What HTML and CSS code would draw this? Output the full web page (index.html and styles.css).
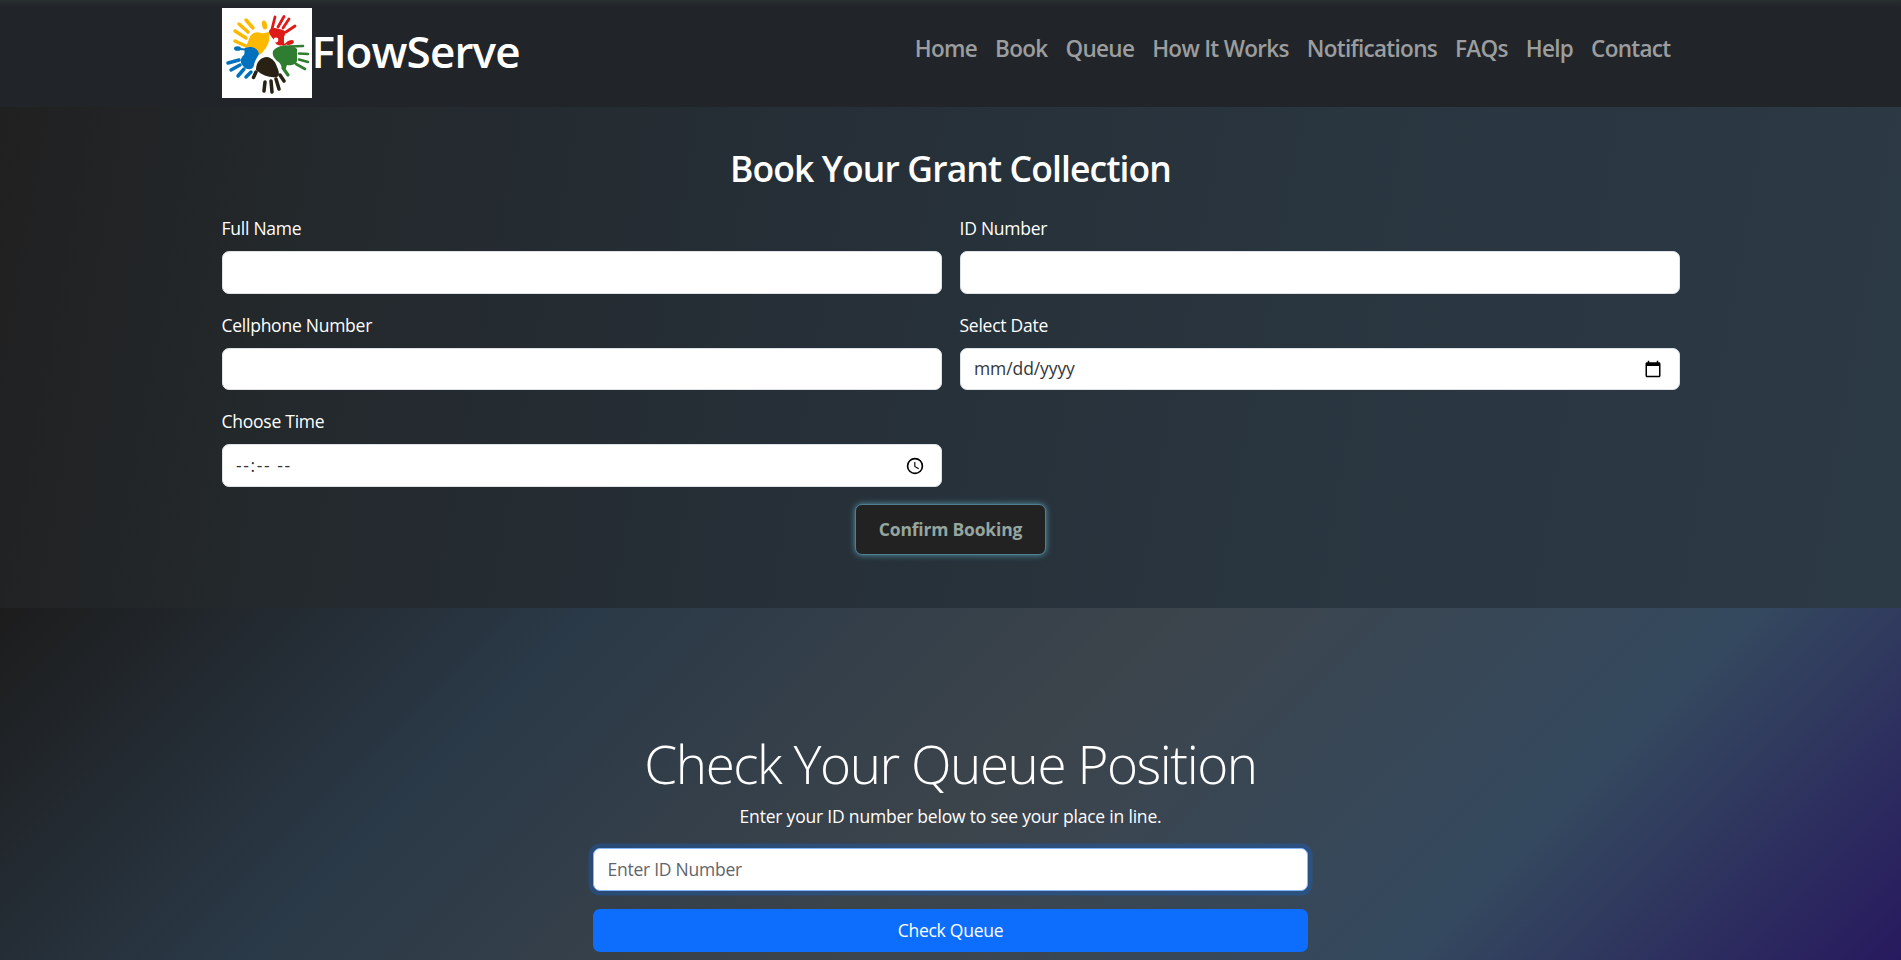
FILE: index.html
```html
<!DOCTYPE html>
<html lang="en">
<head>
<meta charset="utf-8">
<title>FlowServe</title>
<link rel="stylesheet" href="styles.css">
</head>
<body>
<header class="navbar">
  <div class="container bar">
    <a class="brand">
      <svg class="logo" viewBox="0 0 90 90">
        <rect width="90" height="90" fill="#fff"/>
        <g fill="#fdb900" stroke="#fdb900" stroke-linecap="round">
          <path stroke="none" d="M27 31c2-6 7-8 12-6 3 1 6-1 8-1 1 6 0 13-4 17-2 2-3 5-6 6-3-6-8-9-13-8 1-3 2-5 3-8z"/>
          <path fill="none" stroke-width="3.500" d="M31 20L24 12M26 24L17 16M24 30L13 23M24 38L13 33"/>
          <ellipse cx="42.500" cy="17" rx="2.500" ry="4.500" stroke="none" transform="rotate(-12 42.500 17)"/>
        </g>
        <g fill="#df1b17" stroke="#df1b17" stroke-linecap="round">
          <path stroke="none" d="M47 24c0-3 3-4 6-4 3 1 8 1 11 4l-2 5 0 8c-5 1-8 0-9-3-1-4-5-5-6-10z"/>
          <path fill="none" stroke-width="2.800" d="M50 21L53 9M56 19L62 8.500M61 20L67 11M64 24L73 18"/>
          <ellipse cx="68" cy="34.500" rx="4" ry="2.200" stroke="none" transform="rotate(-20 68 34.500)"/>
          <path fill="none" stroke-width="1.500" d="M61 37L66 35"/>
          <circle cx="54" cy="32" r="2.400" fill="#fff" stroke="none"/>
        </g>
        <g fill="#0071bd" stroke="#0071bd" stroke-linecap="round">
          <path stroke="none" d="M23 40c5-2 13-1 14 6-2 4-4 6-5 11-1 6-8 5-11 1-4-4-2-9 1-11 1-2 0-5 1-7z"/>
          <path fill="none" stroke-width="3.500" d="M17 52L6 55M18 57L9 62M22 61L16 68M29 64L24 69"/>
          <ellipse cx="15.500" cy="40.500" rx="3.500" ry="2.300" stroke="none"/>
          <path fill="none" stroke-width="1.800" d="M17 41L24 41.500"/>
        </g>
        <g fill="#292113" stroke="#292113" stroke-linecap="round">
          <path stroke="none" d="M34 62c0-8 5-13 11-13 6 1 9 6 10 10 2 4 3 8 0 10-7 1-14-1-21-7z"/>
          <path fill="none" stroke-width="3.500" d="M34 64L31.500 69.500M43 74L42 83M49 73L50 84M54 71L57 81M58 67L62 73"/>
        </g>
        <g fill="#2f7d31" stroke="#2f7d31" stroke-linecap="round">
          <path stroke="none" d="M51 43c4-5 12-7 20-5l4 3 0 12c-1 4-7 5-10 4-1 2-1 5-3 6-3-2-2-8-7-10-3-3-5-6-4-10z"/>
          <path fill="none" stroke-width="2.600" d="M68 38.500L81 38M77 45.500L86 46M77 51.500L86 54M74 56L83 61"/>
          <path fill="none" stroke-width="3.200" d="M61 60L66 67"/>
        </g>
      </svg><span class="brand-name">FlowServe</span>
    </a>
    <nav class="nav">
      <a>Home</a><a>Book</a><a>Queue</a><a>How It Works</a><a>Notifications</a><a>FAQs</a><a>Help</a><a>Contact</a>
    </nav>
  </div>
</header>

<section class="booking">
  <div class="container">
    <h2 class="booking-title">Book Your Grant Collection</h2>
    <form class="fields">
      <div class="field"><label>Full Name</label><div class="control"></div></div>
      <div class="field"><label>ID Number</label><div class="control"></div></div>
      <div class="field"><label>Cellphone Number</label><div class="control"></div></div>
      <div class="field"><label>Select Date</label>
        <div class="control"><span class="date">mm/dd/yyyy</span>
          <svg class="icon" viewBox="0 0 24 24"><path d="M20 3h-1V1h-2v2H7V1H5v2H4c-1.100 0-2 .900-2 2v16c0 1.100.900 2 2 2h16c1.100 0 2-.900 2-2V5c0-1.100-.900-2-2-2zm0 18H4V8h16v13z"/></svg>
        </div></div>
      <div class="field"><label>Choose Time</label>
        <div class="control"><span class="time">--:-- --</span>
          <svg class="icon" viewBox="0 0 24 24"><path d="M12 1a11 11 0 1 0 0 22 11 11 0 0 0 0-22zm0 19.800a8.800 8.800 0 1 1 0-17.600 8.800 8.800 0 0 1 0 17.600zm.500-14.300H11v6.500l5.500 3.300.800-1.300-4.800-2.800z"/></svg>
        </div></div>
    </form>
    <button class="confirm">Confirm Booking</button>
  </div>
</section>

<section class="queue">
  <h1 class="queue-title">Check Your Queue Position</h1>
  <p class="queue-text">Enter your ID number below to see your place in line.</p>
  <div class="queue-form">
    <div class="control focused"><span>Enter ID Number</span></div>
    <button class="check">Check Queue</button>
  </div>
</section>
</body>
</html>
```
FILE: styles.css
```css
html { height: 960px; overflow: hidden; }

* { box-sizing: border-box; }

body {
  display: flex;
  flex-direction: column;
  margin: 0;
  height: 960px;
  overflow: hidden;
  background: #212529;
  color: #fff;
  font: 17.5px/27px "Open Sans", "Noto Sans", sans-serif;
  letter-spacing: -0.25px;
}

.container { width: 1458px; margin: 0 auto; }

.navbar {
  height: 107px;
  flex: none;
  padding-top: 8px;
  background: linear-gradient(#292e30 0, #212529 7px);
}
.bar { display: flex; justify-content: space-between; }
.brand { display: flex; height: 90px; }
.logo { width: 90px; height: 90px; }
.brand-name {
  font-size: 44px;
  line-height: 86px;
  font-weight: 600;
  letter-spacing: -0.85px;
}
.nav {
  display: flex;
  gap: 18px;
  padding: 24px 9px 0 0;
  color: #9b9d9f;
  font-size: 22.5px;
  line-height: 34px;
  font-weight: 600;
  letter-spacing: -0.7px;
  white-space: nowrap;
}

.booking {
  height: 501px;
  flex: none;
  padding-top: 40px;
  background: linear-gradient(100deg, #202020 0%, #23282b 15%, #262f37 42%, #29353f 68%, #2c3a46 100%);
}
.booking-title {
  margin: 0 0 25px;
  text-align: center;
  font-size: 35.5px;
  line-height: 43px;
  font-weight: 600;
  letter-spacing: -0.87px;
}
.fields {
  display: grid;
  grid-template-columns: 1fr 1fr;
  gap: 17.85px 18px;
}
.field label { display: block; height: 27px; margin-bottom: 9px; }
.control {
  display: flex;
  align-items: center;
  justify-content: space-between;
  height: 42.75px;
  padding: 0 13.5px;
  border: 1px solid #dee2e6;
  border-radius: 7px;
  background: #fff;
  color: #33373b;
}
.date { letter-spacing: -0.1px; }
.time { letter-spacing: 1.6px; }
.icon { width: 18px; height: 18px; margin-right: 3px; fill: #000; }
.confirm {
  display: block;
  width: 191px;
  height: 51px;
  margin: 17px auto 0;
  padding: 0;
  border: 1px solid #4f7f91;
  border-radius: 7px;
  background: #222;
  box-shadow: 0 0 6px #5796aa;
  color: #95a5a0;
  font: 700 17.5px/48px "Open Sans", "Noto Sans", sans-serif;
  letter-spacing: -0.2px;
}

.queue {
  height: 352px;
  flex: none;
  padding-top: 123px;
  text-align: center;
  background: linear-gradient(135deg, #1c1c1c 0%, #2a3947 25%, #3c444b 50%, #34495e 75%, #25115f 100%) 0 0 / 100% 440px no-repeat;
}
.queue-title {
  margin: 0 0 7px;
  font-size: 53px;
  line-height: 65px;
  font-weight: 300;
  letter-spacing: -1.45px;
}
.queue-text { margin: 0 0 18px; letter-spacing: -0.2px; }
.queue-form {
  display: flex;
  flex-direction: column;
  gap: 18px;
  width: 715px;
  margin: 0 auto;
}
.focused {
  border-color: #86b7fe;
  box-shadow: 0 0 0 4.5px rgba(13, 110, 253, 0.25);
  color: #5f656b;
}
.check {
  height: 42.75px;
  padding: 0;
  border: 0;
  border-radius: 7px;
  background: #0d6efd;
  color: #fff;
  font: 17.5px/42px "Open Sans", "Noto Sans", sans-serif;
  letter-spacing: -0.25px;
}
```
